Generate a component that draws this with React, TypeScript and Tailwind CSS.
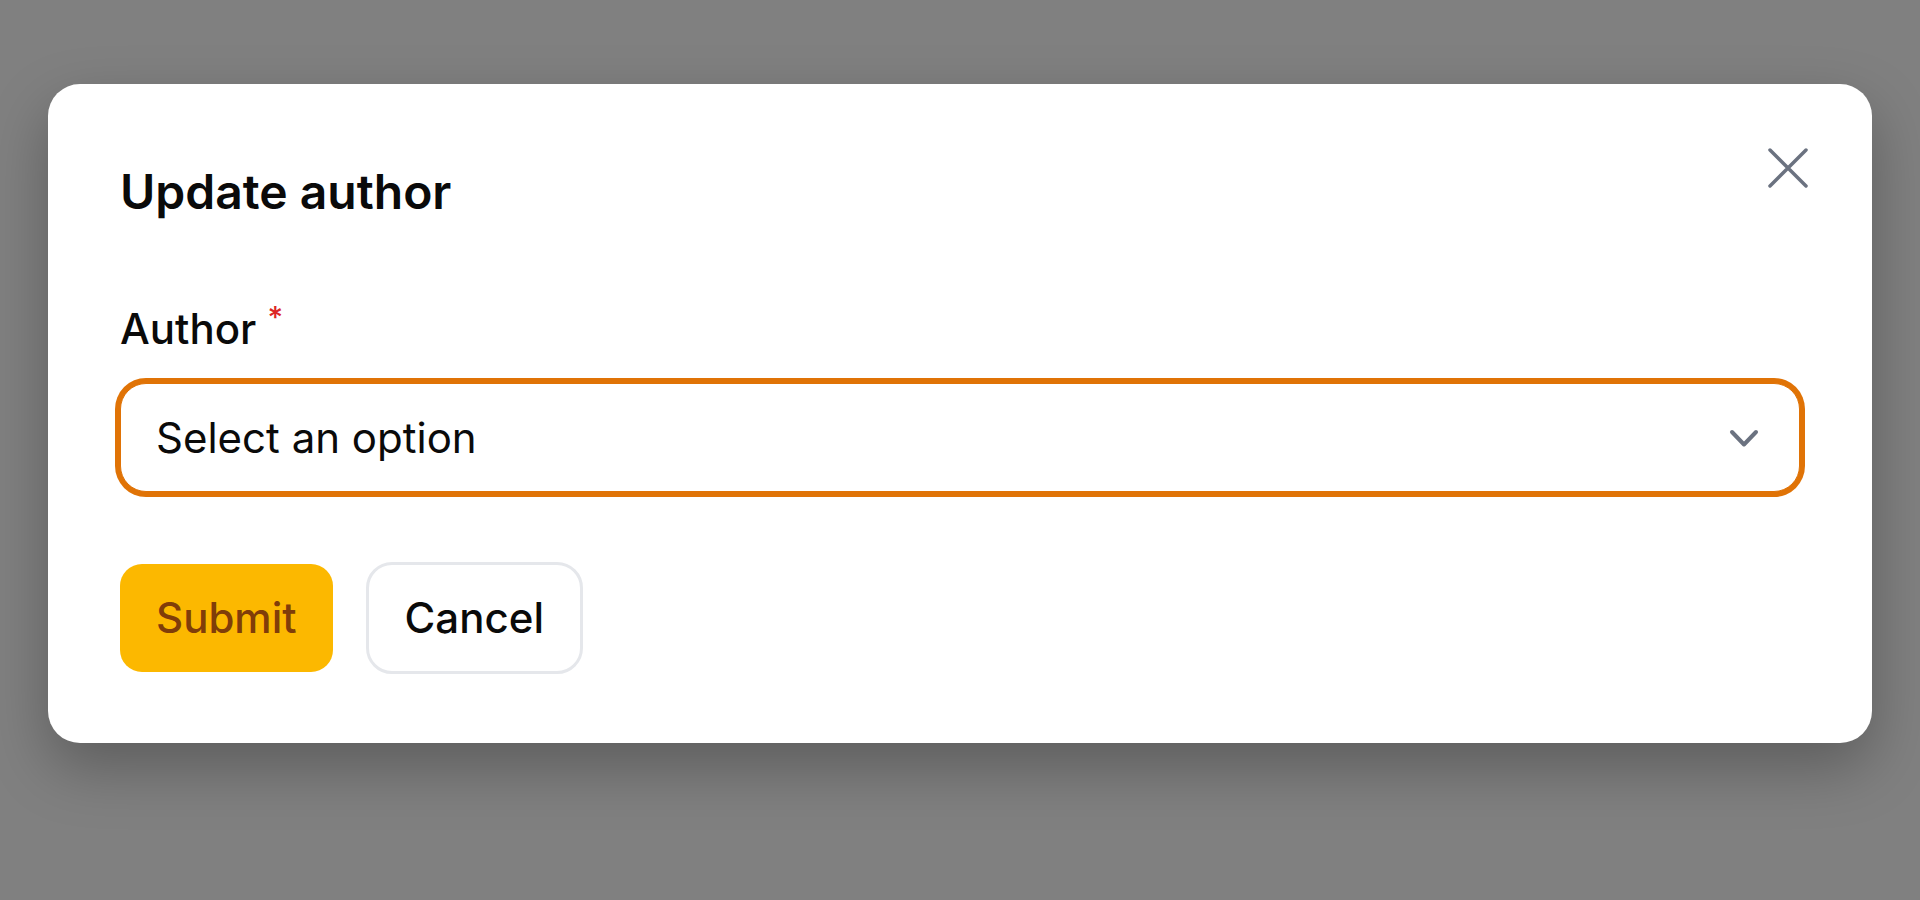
import { useState } from "react";

const CloseIcon = () => (
  <svg width="40" height="40" viewBox="0 0 40 40" fill="none" stroke="#6b7280" strokeWidth="3.5" strokeLinecap="round">
    <path d="M2 2 L38 38 M38 2 L2 38" />
  </svg>
);

const Chevron = () => (
  <svg width="32" height="20" viewBox="0 0 32 20" fill="none" stroke="#6b7280" strokeWidth="4" strokeLinecap="round" strokeLinejoin="round">
    <path d="M4 4 L16 16.5 L28 4" />
  </svg>
);

const App = () => {
  const [author, setAuthor] = useState("");

  return (
    <div className="min-h-screen w-full bg-[#808080] px-[48px] pt-[84px] font-['Inter','Noto_Sans',sans-serif]">
      <div className="relative rounded-[32px] bg-white px-[72px] pt-[76px] pb-[69px] shadow-[0_24px_60px_rgba(0,0,0,0.28)]">
        {/* close */}
        <button className="absolute right-[60px] top-[60px] flex h-[48px] w-[48px] items-center justify-center">
          <CloseIcon />
        </button>

        <h2 className="text-[48px] leading-[64px] font-semibold text-[#0a0a0a]">Update author</h2>

        <div className="mt-[77px] flex flex-col">
          <label className="text-[42px] leading-[56px] font-medium text-[#0a0a0a]">
            Author <sup className="text-[30px] font-medium text-[#dc2626] top-[-0.55em]">*</sup>
          </label>

          <div className="mt-[26px] flex h-[109px] items-center justify-between rounded-[26px] border border-[#e07306] bg-white pl-[35px] pr-[39px] ring-[5px] ring-[#e07306]">
            <span className="text-[42px] leading-[48px] text-[#0a0a0a]">{author || "Select an option"}</span>
            <Chevron />
          </div>
        </div>

        <div className="mt-[70px] flex items-center gap-[33px]">
          <button
            onClick={() => setAuthor("")}
            className="h-[108px] rounded-[22px] bg-[#fcb800] px-[36px] text-[42px] leading-[48px] font-medium text-[#803d09]"
          >
            Submit
          </button>
          <button className="h-[112px] rounded-[26px] border-[3px] border-[#e5e7eb] bg-white px-[36px] text-[42px] leading-[48px] font-medium text-[#0a0a0a]">
            Cancel
          </button>
        </div>
      </div>
    </div>
  );
};

export default App;
